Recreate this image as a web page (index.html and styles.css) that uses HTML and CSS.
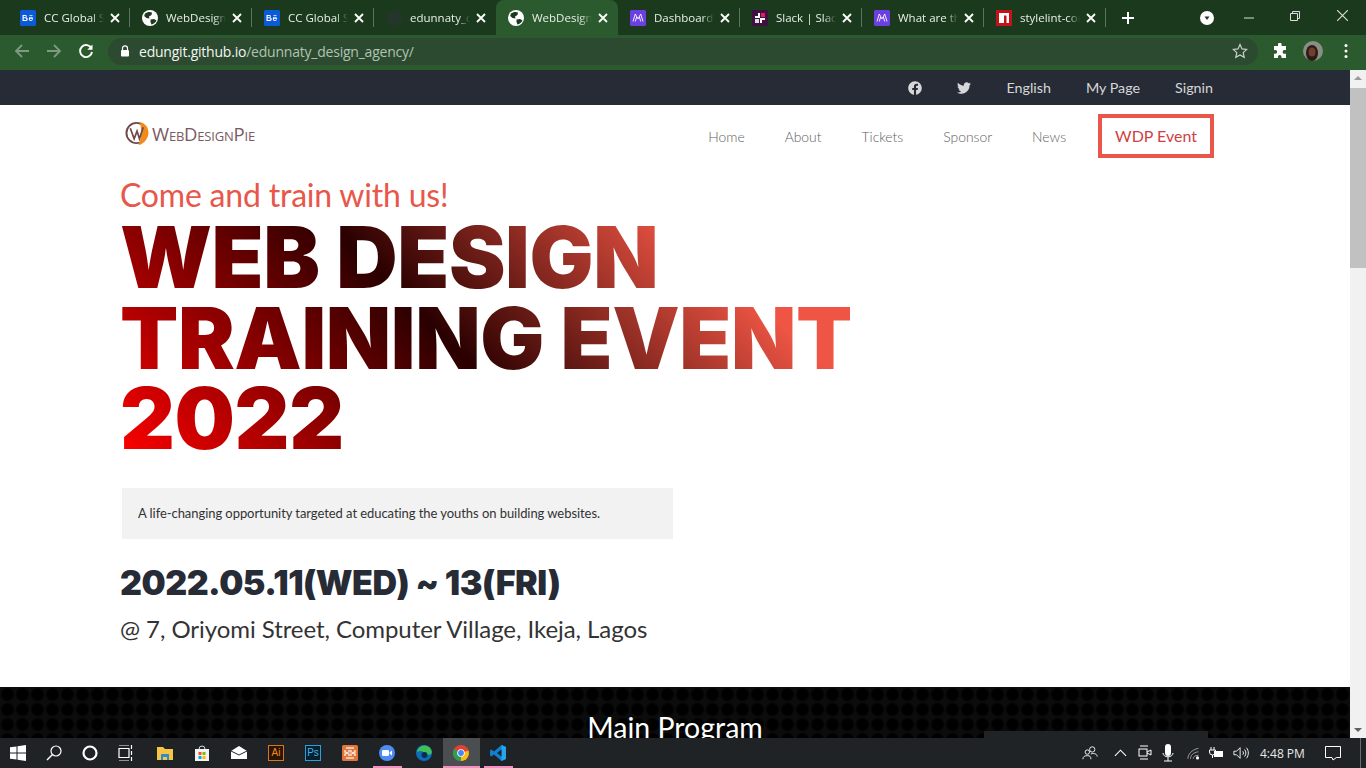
FILE: index.html
```html
<!DOCTYPE html>
<html lang="en">
<head>
<meta charset="utf-8">
<title>WebDesignPie</title>
<link rel="stylesheet" href="styles.css">
</head>
<body>
<svg class="defs" width="0" height="0" aria-hidden="true">
  <symbol id="globe" viewBox="0 0 16 16"><circle cx="8" cy="8" r="8" fill="#fff"/><path d="M3 3.500C5 1.800 8 1.500 10 2.500L9.500 5 7 6.500 7.500 8.500 4.500 8 2.200 6ZM8.500 9.500 12 9 14.500 10.500C13.500 12.500 11.500 14 9.500 14.500L8.500 12Z" fill="#1c3a1e"/></symbol>
  <symbol id="x" viewBox="0 0 10 10"><path d="M1 1 9 9M9 1 1 9" stroke="#fff" stroke-width="1.800" fill="none"/></symbol>
  <symbol id="be" viewBox="0 0 16 16"><rect width="16" height="16" rx="1.500" fill="#0b5ad9"/><path d="M2.500 5h3a1.400 1.400 0 0 1 .8 2.500A1.600 1.600 0 0 1 5.700 11H2.500ZM3.700 6v1.300h1.600a.65.65 0 0 0 0-1.300ZM3.700 8.300V10h1.800a.85.85 0 0 0 0-1.700ZM9.500 5h3v.8h-3ZM8.700 8.700a2.200 2.200 0 0 1 4.400.3H9.800c0 1.300 1.800 1.400 2.200.5h1.100c-.6 2-4.400 1.900-4.400-.8Zm1.100-.400h2.200c-.2-1-2-1-2.200 0Z" fill="#fff"/></symbol>
  <symbol id="mm" viewBox="0 0 16 16"><rect width="16" height="16" rx="1.500" fill="#6c3fe0"/><path d="M3 11.500 5.300 4 8 9 10.700 4 13 11.500M5.300 11.500 6.600 7M10.700 11.500 9.400 7" stroke="#fff" stroke-width=".9" fill="none"/></symbol>
</svg>

<div class="screen">
  <header class="chrome">
    <div class="tabstrip">
      <div class="tab"><svg class="fav"><use href="#be"/></svg><span class="tab-title">CC Global Search</span><svg class="close"><use href="#x"/></svg></div>
      <div class="tab"><svg class="fav"><use href="#globe"/></svg><span class="tab-title">WebDesignPie</span><svg class="close"><use href="#x"/></svg></div>
      <div class="tab"><svg class="fav"><use href="#be"/></svg><span class="tab-title">CC Global Search</span><svg class="close"><use href="#x"/></svg></div>
      <div class="tab tab-before-active"><svg class="fav" viewBox="0 0 16 16"><circle cx="8" cy="8" r="8" fill="#24362a"/></svg><span class="tab-title">edunnaty_design</span><svg class="close"><use href="#x"/></svg></div>
      <div class="tab tab-active"><svg class="fav"><use href="#globe"/></svg><span class="tab-title">WebDesignPie</span><svg class="close"><use href="#x"/></svg></div>
      <div class="tab"><svg class="fav"><use href="#mm"/></svg><span class="tab-title">Dashboard</span><svg class="close"><use href="#x"/></svg></div>
      <div class="tab"><svg class="fav" viewBox="0 0 16 16"><rect width="16" height="16" fill="#3f1040"/><path d="M7 3v4H3M9 13V9h4" stroke="#fff" stroke-width="2" fill="none"/><path d="M9 3h4v4H9z" fill="#e01e5a"/><path d="M3 9h4v4H3z" fill="#ddd"/></svg><span class="tab-title">Slack | Slack Help</span><svg class="close"><use href="#x"/></svg></div>
      <div class="tab"><svg class="fav"><use href="#mm"/></svg><span class="tab-title">What are the best</span><svg class="close"><use href="#x"/></svg></div>
      <div class="tab"><svg class="fav" viewBox="0 0 16 16"><rect width="16" height="16" fill="#c4121a"/><path d="M3 3h10v10h-2.500V5.500H8V13H3z" fill="#fff"/></svg><span class="tab-title">stylelint-config</span><svg class="close"><use href="#x"/></svg></div>
      <svg class="newtab" viewBox="0 0 14 14"><path d="M7 1v12M1 7h12" stroke="#fff" stroke-width="2"/></svg>
      <div class="window-controls">
        <svg class="tabsearch" viewBox="0 0 14 14"><circle cx="7" cy="7" r="7" fill="#fff"/><path d="M4.500 5.500h5L7 9z" fill="#1c3a1e"/></svg>
        <svg class="wc wc-min" viewBox="0 0 10 10"><path d="M0 5h10" stroke="#ddd"/></svg>
        <svg class="wc wc-max" viewBox="0 0 10 10"><path d="M.5 2.500h7v7h-7zM2.500 2.500v-2h7v7h-2" stroke="#ddd" fill="none"/></svg>
        <svg class="wc wc-close" viewBox="0 0 10 10"><path d="M0 0 10 10M10 0 0 10" stroke="#ddd"/></svg>
      </div>
    </div>
    <div class="toolbar">
      <svg class="nav-ico ico-back" viewBox="0 0 16 16"><path d="M15 8H2M8 2 2 8l6 6" stroke="#7f9a80" stroke-width="1.800" fill="none"/></svg>
      <svg class="nav-ico ico-fwd" viewBox="0 0 16 16"><path d="M1 8h13M8 2l6 6-6 6" stroke="#7f9a80" stroke-width="1.800" fill="none"/></svg>
      <svg class="nav-ico ico-reload" viewBox="0 0 16 16"><path d="M13.500 5.500A6 6 0 1 0 14 9" stroke="#fff" stroke-width="1.900" fill="none"/><path d="M14.500 1.500v5.200H9.300z" fill="#fff"/></svg>
      <div class="omnibox">
        <svg class="lock" viewBox="0 0 10 12"><path d="M2.500 5V3.300a2.500 2.500 0 0 1 5 0V5" stroke="#fff" stroke-width="1.200" fill="none"/><rect x="1" y="5" width="8" height="6.500" rx="1" fill="#fff"/></svg>
        <span class="url"><b>edungit.github.io</b>/edunnaty_design_agency/</span>
        <svg class="star" viewBox="0 0 16 16"><path d="m8 1.500 2 4.400 4.700.5-3.500 3.200 1 4.700L8 11.900l-4.200 2.400 1-4.700L1.300 6.400 6 5.900z" stroke="#fff" stroke-width="1.200" fill="none"/></svg>
      </div>
      <svg class="ext" viewBox="0 0 16 16"><path d="M6 1.500a1.800 1.800 0 0 1 3.600 0V3H14v4h-1.500a1.900 1.900 0 0 0 0 3.800H14V15H9.500v-1.300a1.800 1.800 0 0 0-3.600 0V15H2v-4.300h1.300a1.900 1.900 0 0 0 0-3.800H2V3h4z" fill="#fff"/></svg>
      <svg class="avatar" viewBox="0 0 20 20"><circle cx="10" cy="10" r="10" fill="#8a8f86"/><ellipse cx="9" cy="12" rx="6" ry="8" fill="#2e1a14"/><ellipse cx="9" cy="11" rx="3.500" ry="4.500" fill="#6d4030"/></svg>
      <svg class="menu" viewBox="0 0 4 16"><circle cx="2" cy="2.500" r="1.500" fill="#fff"/><circle cx="2" cy="8" r="1.500" fill="#fff"/><circle cx="2" cy="13.500" r="1.500" fill="#fff"/></svg>
    </div>
  </header>

  <div class="viewport">
    <main class="page">
      <div class="topbar">
        <svg class="social" viewBox="0 0 512 512"><path d="M504 256C504 119 393 8 256 8S8 119 8 256c0 123.780 90.690 226.380 209.250 245V327.690h-63V256h63v-54.640c0-62.150 37-96.480 93.670-96.480 27.140 0 55.520 4.840 55.520 4.840v61h-31.280c-30.800 0-40.410 19.120-40.410 38.730V256h68.780l-11 71.690h-57.780V501C413.310 482.380 504 379.780 504 256z"/></svg>
        <svg class="social" viewBox="0 0 512 512"><path d="M459.370 151.716c.325 4.548.325 9.097.325 13.645 0 138.720-105.583 298.558-298.558 298.558-59.452 0-114.680-17.219-161.137-47.106 8.447.974 16.568 1.299 25.340 1.299 49.055 0 94.213-16.568 130.274-44.832-46.132-.975-84.792-31.188-98.112-72.772 6.498.974 12.995 1.624 19.818 1.624 9.421 0 18.843-1.300 27.614-3.573-48.081-9.747-84.143-51.980-84.143-102.985v-1.299c13.969 7.797 30.214 12.670 47.431 13.319-28.264-18.843-46.781-51.005-46.781-87.391 0-19.492 5.197-37.360 14.294-52.954 51.655 63.675 129.300 105.258 216.365 109.807-1.624-7.797-2.599-15.918-2.599-24.040 0-57.828 46.782-104.934 104.934-104.934 30.213 0 57.502 12.670 76.670 33.137 23.715-4.548 46.456-13.320 66.599-25.340-7.798 24.366-24.366 44.833-46.132 57.827 21.117-2.273 41.584-8.122 60.426-16.243-14.292 20.791-32.161 39.308-52.628 54.253z"/></svg>
        <a class="toplink">English</a>
        <a class="toplink">My Page</a>
        <a class="toplink">Signin</a>
      </div>
      <nav class="mainnav">
        <div class="logo">
          <svg class="logo-mark" viewBox="0 0 26 26"><circle cx="12" cy="13" r="10.500" fill="none" stroke="#6f4a4a" stroke-width="2"/><path d="M15 1.500C24 3 27 13 22 20 20 23 17 25 14 25.500 17 19 18 8 15 1.500Z" fill="#f28a1c"/><path d="M5.500 8 9.500 19 12.500 11 15 19 19 7" fill="none" stroke="#6f4a4a" stroke-width="1.800"/></svg>
          <span class="logo-text">WebDesignPie</span>
        </div>
        <div class="navlinks">
          <a class="navlink">Home</a>
          <a class="navlink">About</a>
          <a class="navlink">Tickets</a>
          <a class="navlink">Sponsor</a>
          <a class="navlink">News</a>
          <a class="navbtn">WDP Event</a>
        </div>
      </nav>
      <section class="hero">
        <p class="hero-kicker">Come and train with us!</p>
        <h1 class="hero-title">WEB DESIGN<br>TRAINING EVENT<br>2022</h1>
        <p class="hero-desc">A life-changing opportunity targeted at educating the youths on building websites.</p>
        <p class="hero-date">2022.05.11(WED) ~ 13(FRI)</p>
        <p class="hero-place">@ 7, Oriyomi Street, Computer Village, Ikeja, Lagos</p>
      </section>
      <section class="program">
        <h2 class="program-title">Main Program</h2>
      </section>
    </main>
    <div class="scrollbar">
      <span class="sb-arrow sb-up"></span>
      <span class="sb-thumb"></span>
      <span class="sb-arrow sb-down"></span>
    </div>
    <div class="float-strip"></div>
  </div>

  <footer class="taskbar">
    <div class="tb-system">
      <span class="tb-cell"><svg viewBox="0 0 16 16" class="tb-ico"><path d="M0 2.300 6.500 1.400V7.500H0ZM7.500 1.200 16 0V7.500H7.500ZM0 8.500H6.500V14.600L0 13.700ZM7.500 8.500H16V16L7.500 14.800Z" fill="#fff"/></svg></span>
      <span class="tb-cell"><svg viewBox="0 0 16 16" class="tb-ico"><circle cx="10" cy="6" r="5" stroke="#fff" stroke-width="1.200" fill="none"/><path d="M6.500 9.500 1 15" stroke="#fff" stroke-width="1.400"/></svg></span>
      <span class="tb-cell"><svg viewBox="0 0 16 16" class="tb-ico"><circle cx="8" cy="8" r="6.500" stroke="#fff" stroke-width="2.200" fill="none"/></svg></span>
      <span class="tb-cell"><svg viewBox="0 0 16 16" class="tb-ico"><path d="M1 0h10M1 16h10M1 3.500h10v9H1zM13.500 0v4M13.500 6v4M13.500 12v4" stroke="#fff" stroke-width="1.200" fill="none"/></svg></span>
    </div>
    <div class="tb-apps">
      <span class="tb-cell app"><svg viewBox="0 0 16 16" class="tb-ico"><path d="M0 2h6l2 2h8v11H0z" fill="#f6c544"/><path d="M4 9h8v6h-2v-3H6v3H4z" fill="#2d8ccb"/></svg></span>
      <span class="tb-cell app"><svg viewBox="0 0 16 16" class="tb-ico"><path d="M1 4h14v12H1z" fill="#f3f3f3"/><path d="M5 4a3 3 0 0 1 6 0" stroke="#ddd" fill="none"/><path d="M4.500 7H7.500v3h-3z" fill="#f25022"/><path d="M8.500 7h3v3h-3z" fill="#7fba00"/><path d="M4.500 11H7.500v3h-3z" fill="#00a4ef"/><path d="M8.500 11h3v3h-3z" fill="#ffb900"/></svg></span>
      <span class="tb-cell app"><svg viewBox="0 0 16 16" class="tb-ico"><path d="M0 6 8 1l8 5v8H0z" fill="#fff"/><path d="M0 6 8 10l8-4" stroke="#1f2326" fill="none"/></svg></span>
      <span class="tb-cell app"><span class="sq sq-ai">Ai</span></span>
      <span class="tb-cell app"><span class="sq sq-ps">Ps</span></span>
      <span class="tb-cell app"><svg viewBox="0 0 16 16" class="tb-ico"><rect width="16" height="16" rx="1.500" fill="#e0763c"/><path d="M4 3h8M4 13h8M3 5v2l3 1-3 1v2M13 5v2l-3 1 3 1v2M6 6h4M6 10h4" stroke="#fbe3d4" stroke-width="1.500" fill="none"/></svg></span>
      <span class="tb-cell app open"><svg viewBox="0 0 16 16" class="tb-ico"><circle cx="8" cy="8" r="8" fill="#4d8cf5"/><rect x="3" y="5" width="7" height="6" rx="1.200" fill="#fff"/><path d="M10.500 7.500 13 5.500v5l-2.500-2z" fill="#fff"/></svg></span>
      <span class="tb-cell app"><svg viewBox="0 0 16 16" class="tb-ico"><circle cx="8" cy="8" r="8" fill="#0f6cbd"/><path d="M1 7a7.500 7.500 0 0 1 14.800-.500c.4 3-4 4-6.300 2.500C8 7 5 4.500 1 7z" fill="#41c05a"/><circle cx="8.500" cy="10" r="3" fill="#062f55"/></svg></span>
      <span class="tb-cell app open current"><svg viewBox="0 0 16 16" class="tb-ico"><circle cx="8" cy="8" r="8" fill="#e34133"/><path d="M8 8 15.500 5.500A8 8 0 0 1 8 16z" fill="#f9bc15"/><path d="M8 8 8 16A8 8 0 0 1 1 4z" fill="#2f9e4f"/><circle cx="8" cy="8" r="3.800" fill="#fff"/><circle cx="8" cy="8" r="2.900" fill="#4587f3"/></svg></span>
      <span class="tb-cell app open"><svg viewBox="0 0 16 16" class="tb-ico"><path d="M11.500 0 16 2v12l-4.500 2L4 9.500 1.500 11.500 0 10.500V5.500l1.500-1L4 6.500z" fill="#0f7fd0"/><path d="M11.500 0 16 2v12l-4.500 2z" fill="#25a5ee"/><path d="M11.500 4.500 7 8l4.500 3.500z" fill="#1f2326"/></svg></span>
    </div>
    <div class="tb-tray">
      <svg class="tray-ico" viewBox="0 0 18 16"><circle cx="11.500" cy="4" r="3" stroke="#fff" fill="none"/><circle cx="6" cy="7" r="2.500" stroke="#fff" fill="none"/><path d="M1 15c0-3 2-4 5-4s4 1 4 4M10 9c4-1 7 0 7 3" stroke="#fff" fill="none"/></svg>
      <svg class="tray-ico tray-caret" viewBox="0 0 14 8"><path d="M1 7 7 1l6 6" stroke="#fff" stroke-width="1.200" fill="none"/></svg>
      <svg class="tray-ico tray-meet" viewBox="0 0 14 18"><rect x="1" y="5" width="8" height="7" stroke="#fff" fill="none"/><path d="M9 8l4-2v5l-4-2M2 2h8M2 15h8" stroke="#fff" fill="none"/></svg>
      <svg class="tray-ico tray-mic" viewBox="0 0 14 18"><rect x="4" y="0" width="6" height="12" rx="3" fill="#fff"/><path d="M2 9c0 5 10 5 10 0M7 13v4M3 17h8" stroke="#fff" fill="none"/></svg>
      <svg class="tray-ico tray-wifi" viewBox="0 0 16 14"><path d="M1 13C1 8 5 3 13 1M4 13c0-4 3-7 9-8M7 13c0-2 2-4 6-4" stroke="#aaa" fill="none"/><circle cx="12" cy="12" r="1.800" fill="#fff"/></svg>
      <svg class="tray-ico tray-batt" viewBox="0 0 16 12"><path d="M3 0v3M6 0v3M1.500 3h6v2a3 3 0 0 1-6 0zM4.500 8v3" stroke="#fff" fill="none"/><rect x="6" y="4" width="9" height="6" fill="#fff"/></svg>
      <svg class="tray-ico tray-vol" viewBox="0 0 18 14"><path d="M1 5h3l4-4v12L4 9H1zM11 5c1 1 1 3 0 4M13 3c2 2 2 6 0 8M15 1c3 3 3 9 0 12" stroke="#fff" fill="none"/></svg>
      <span class="clock">4:48 PM</span>
      <svg class="tray-ico tray-note" viewBox="0 0 16 16"><path d="M.5 1.500h15v11h-4l-3.500 2.500-1-2.500H.5z" stroke="#fff" fill="none"/></svg>
      <span class="show-desktop"></span>
    </div>
  </footer>
</div>
</body>
</html>
```
FILE: styles.css
```css
* { box-sizing: border-box; }
html, body { margin: 0; height: 100%; overflow: hidden; }
body { font-family: "Lato", "Liberation Sans", sans-serif; background: #fff; }
.defs { position: absolute; }
p, h1, h2 { margin: 0; font-weight: normal; }

.screen { width: 1366px; height: 768px; display: flex; flex-direction: column; }

/* Browser chrome */
.chrome { flex: none; height: 70px; background: #2a5a2d; }
.tabstrip { height: 35px; background: #1b3a1d; padding: 0 0 0 8px; display: flex; align-items: stretch; }
.tab { width: 122px; display: flex; align-items: center; padding: 0 10px 0 12px; position: relative; color: #e8efe8; font: 11.500px "Open Sans", sans-serif; }
.tab::after { content: ""; position: absolute; right: 0; top: 8px; bottom: 8px; width: 1px; background: #5c735d; }
.tab-active { background: #2a5a2d; border-radius: 8px 8px 0 0; }
.tab-active::after, .tab-before-active::after { display: none; }
.fav { width: 16px; height: 16px; flex: none; margin-right: 8px; }
.tab-title { flex: 1; min-width: 0; white-space: nowrap; overflow: hidden; -webkit-mask-image: linear-gradient(90deg, #000 80%, transparent 100%); mask-image: linear-gradient(90deg, #000 80%, transparent 100%); }
.close { width: 10px; height: 10px; flex: none; margin-left: 6px; }
.newtab { width: 14px; height: 14px; margin: 0 0 0 15px; align-self: center; flex: none; }
.window-controls { margin-left: auto; display: flex; align-items: center; }
.tabsearch { width: 14px; height: 14px; margin-right: 30px; }
.wc { width: 10px; height: 10px; }
.wc-min { margin-right: 36px; }
.wc-max { margin-right: 37px; margin-top: -4px; }
.wc-close { width: 11px; height: 11px; margin-right: 18px; margin-top: -4px; }

.toolbar { height: 35px; display: flex; align-items: center; padding: 0 0 3px 14px; position: relative; background: #2a5a2d; }
.nav-ico { width: 16px; height: 16px; flex: none; }
.ico-back { margin-right: 16px; }
.ico-fwd { margin-right: 16px; }
.ico-reload { margin-right: 14px; }
.omnibox { width: 1150px; height: 27px; background: #2c4a2f; border-radius: 14px; display: flex; align-items: center; padding: 0 10px 0 12px; color: #b0c2b1; font: 14px "Open Sans", sans-serif; }
.lock { width: 10px; height: 12px; margin-right: 9px; flex: none; }
.url { flex: 1; letter-spacing: -0.22px; }
.url b { color: #f3f6f3; font-weight: 400; }
.star { width: 16px; height: 16px; opacity: .75; }
.ext { width: 16px; height: 16px; margin-left: 14px; }
.avatar { width: 20px; height: 20px; margin-left: 15px; }
.menu { width: 4px; height: 16px; margin-left: 21px; }

/* Page */
.viewport { flex: 1; min-height: 0; display: flex; position: relative; overflow: hidden; }
.page { flex: 1; min-width: 0; overflow: hidden; background: #fff; }
.topbar { height: 35px; background: #272b36; display: flex; align-items: center; justify-content: flex-end; gap: 35px; padding-right: 137px; color: #d6d7d9; font-size: 14.300px; }
.social { width: 14px; height: 14px; fill: #d6d7d9; }
.mainnav { display: flex; justify-content: space-between; align-items: flex-start; padding: 9px 136px 0 125px; height: 69px; }
.logo { display: flex; align-items: center; margin-top: 6px; }
.logo-mark { width: 25px; height: 26px; flex: none; }
.logo-text { font: 500 18.500px "Open Sans", sans-serif; font-variant: small-caps; color: #7b5a62; margin-left: 2px; letter-spacing: -0.2px; }
.navlinks { display: flex; align-items: center; gap: 40px; }
.navlink { font-size: 13.900px; font-weight: 300; color: #5e5e5e; }
.navbtn { margin-left: -8px; border: 4px solid #e8574a; padding: 9px 13px; font-size: 16px; color: #cf3f45; line-height: 18px; height: 44px; display: flex; align-items: center; }

.hero { padding: 0 0 0 120px; height: 513px; }
.hero-kicker { font-size: 32px; letter-spacing: -0.2px; line-height: 42px; color: #e8574a; height: 44px; }
.hero-title { width: 730px; font: 900 85px/80.500px "Inter", sans-serif; letter-spacing: -0.4px; white-space: nowrap; color: transparent; background: linear-gradient(45deg, #f00 0, #2a0000 46%, #ee5544 82%); -webkit-background-clip: text; background-clip: text; }
.hero-desc { margin: 28px 0 0 2px; width: 551px; height: 51px; background: #f2f2f2; padding: 0 16px; letter-spacing: -0.06px; font-size: 13px; line-height: 50px; color: #333; }
.hero-date { margin-top: 21px; font: 900 34px/46px "Inter", sans-serif; letter-spacing: -0.5px; color: #272b36; }
.hero-place { margin-top: 7px; font-size: 24px; letter-spacing: -0.06px; line-height: 32px; color: #333; }

.program { background-color: #000; background-image: radial-gradient(circle at 7.500px 7.500px, #000 5px, #0c0c0c 7.500px); background-size: 15px 15px; height: 100px; text-align: center; padding-top: 22px; }
.program-title { font-size: 28.500px; line-height: 36px; color: #fff; }

.scrollbar { width: 16px; flex: none; background: #f1f1f1; display: flex; flex-direction: column; align-items: center; position: relative; }
.sb-arrow { width: 0; height: 0; border-left: 4px solid transparent; border-right: 4px solid transparent; position: absolute; }
.sb-up { top: 6px; border-bottom: 4px solid #9a9a9a; }
.sb-down { bottom: 6px; border-top: 4px solid #606060; }
.sb-thumb { width: 100%; height: 180px; margin-top: 18px; background: #c1c1c1; }
.float-strip { position: absolute; left: 984px; bottom: 0; width: 224px; height: 7px; background: #1f2326; }

/* Taskbar */
.taskbar { flex: none; height: 30px; background: #1f2326; display: flex; align-items: stretch; color: #fff; }
.tb-system { display: flex; }
.tb-apps { display: flex; margin-left: 2.500px; }
.tb-cell { width: 36px; display: flex; align-items: center; justify-content: center; position: relative; }
.tb-cell.app { width: 37px; }
.tb-ico { width: 16px; height: 16px; }
.open::after { content: ""; position: absolute; left: 4px; right: 4px; bottom: 0; height: 2px; background: #f48fc0; }
.current { background: #4b4e50; }
.current::after { left: 0; right: 0; }
.sq { width: 16px; height: 16px; display: flex; align-items: center; justify-content: center; font: 10px/1 "Liberation Sans", sans-serif; }
.sq-ai { border: 1px solid #d9751c; color: #f08a2a; background: #2a1500; }
.sq-ps { border: 1px solid #2d9fd9; color: #3fb4ee; background: #06202e; }
.tb-tray { margin-left: auto; display: flex; align-items: center; position: relative; padding-right: 5px; }
.tray-ico { width: 16px; height: 16px; margin-right: 7px; flex: none; }
.tray-caret { width: 13px; height: 8px; margin: 0 11px 0 9px; }
.tray-meet { width: 14px; height: 18px; margin-right: 9px; }
.tray-mic { width: 14px; height: 18px; margin-right: 12px; }
.tray-wifi { width: 14px; height: 13px; margin-right: 7px; }
.tray-batt { width: 16px; height: 12px; margin-right: 9px; }
.tray-vol { width: 16px; height: 14px; margin-right: 11px; }
.clock { font: 12px "Open Sans", sans-serif; margin-right: 21px; width: 44px; white-space: nowrap; color: #e8e8e8; }
.tray-note { width: 16px; height: 16px; margin-right: 19px; }
.show-desktop { width: 1px; height: 30px; background: #6a6d6f; }
```
